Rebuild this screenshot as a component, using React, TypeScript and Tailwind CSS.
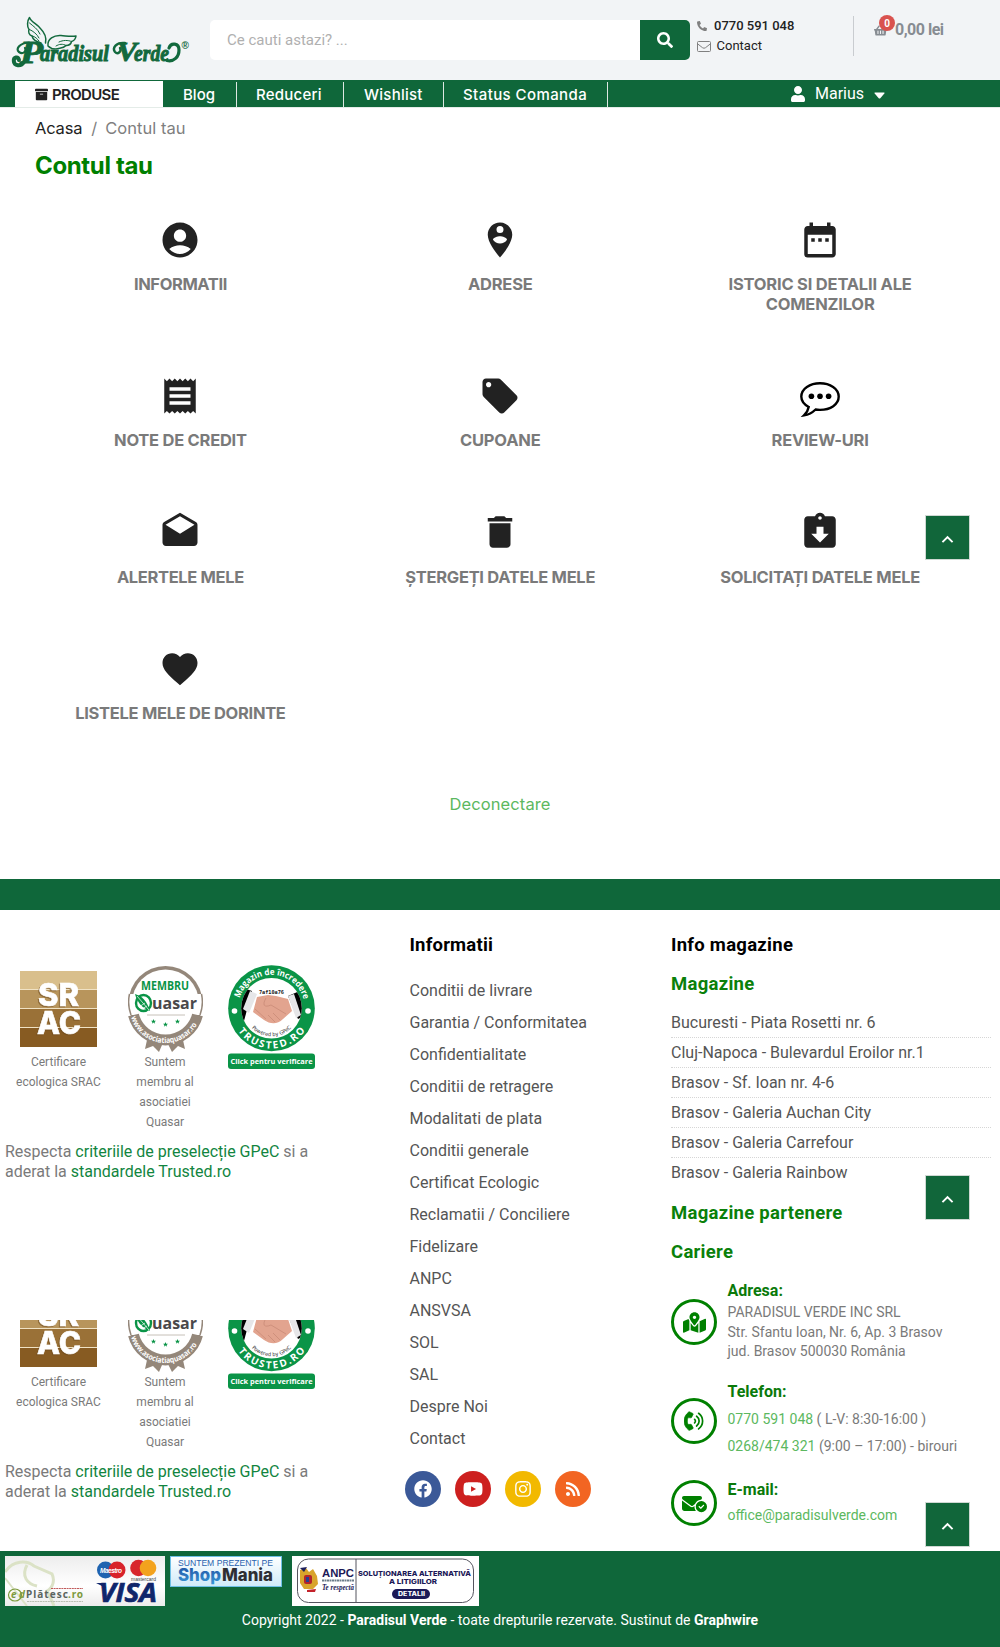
import React from "react";
import {
  MdAccountCircle,
  MdPersonPinCircle,
  MdDateRange,
  MdReceipt,
  MdLocalOffer,
  MdDrafts,
  MdDelete,
  MdAssignmentReturned,
  MdFavorite,
  MdKeyboardArrowUp,
} from "react-icons/md";
import {
  FaSearch,
  FaPhoneAlt,
  FaShoppingBasket,
  FaUser,
  FaArchive,
  FaMapMarkedAlt,
  FaFacebook,
  FaYoutube,
  FaInstagram,
  FaRss,
} from "react-icons/fa";
import { FaEnvelopeCircleCheck } from "react-icons/fa6";

function Logo() {
  return (
    <svg width="180" height="56" viewBox="0 0 180 56" className="mt-[14px] ml-[11px] shrink-0">
      <g fill="none" stroke="#12693d" strokeWidth="1.5" strokeLinecap="round" strokeLinejoin="round">
        <path d="M30 29C26 28 22 26 21 22C18 21 17 18 18 15.500C16 13 16 7 18.500 3.500C20 8 26 10 29 14C33 18 36 23 34.500 29" />
        <path d="M18.500 9C22 12 27 15 29 20M18.500 15.500C22 17 26 20 28 24M21.500 22C24 22.500 26.500 25 28 27" strokeWidth="1" />
        <path d="M37 32C36 25 43 21 50 21.500C56 22 60 23 65 22C64.500 25.500 62.500 27 60.500 27.500C60 30 57.500 31.500 55 31.500C52 35 48 33.500 45 35C42 35 39 34 37 32Z" />
        <path d="M60.500 27.500C57 26 52 26 48 28M55 31.500C52 29.500 48 30 45 32" strokeWidth="1" />
      </g>
      <g fill="none" stroke="#12693d" strokeLinecap="round">
        <path d="M18 28.500C9 29 4 35 8 38C12 41 16 37 14 34" strokeWidth="2.200" />
        <path d="M13 48C10 53 3 52 2.800 47C2.600 43 7 42 8 46" strokeWidth="4" />
        <path d="M114 29C105 28 101 34 104 38C107 41 111 37 109 34" strokeWidth="2.400" />
        <path d="M158 34C160 28 168 29 168 36C168 43 163 48 156 46.500" strokeWidth="3.200" />
      </g>
      <g
        fill="#12693d"
        stroke="#12693d"
        strokeWidth="1"
        fontFamily="'Liberation Serif', serif"
        fontWeight="700"
        fontStyle="italic"
      >
        <text x="9" y="48.500" fontSize="31" textLength="23" lengthAdjust="spacingAndGlyphs">P</text>
        <text x="29" y="47" fontSize="24" textLength="69" lengthAdjust="spacingAndGlyphs">aradisul</text>
        <text x="106" y="47" fontSize="28" textLength="20" lengthAdjust="spacingAndGlyphs">V</text>
        <text x="123" y="47" fontSize="24" textLength="35" lengthAdjust="spacingAndGlyphs">erde</text>
      </g>
      <text x="170.500" y="35" fontSize="10" fill="#12693d" fontWeight="700" fontFamily="'Liberation Sans', sans-serif">®</text>
    </svg>
  );
}

function ReviewIcon() {
  return (
    <svg width="42" height="42" viewBox="0 0 42 42" className="block">
      <path
        d="M21 8.200C31 8.200 39.700 13.600 39.700 21.600C39.700 29.600 31.500 34.900 21 34.900C19.400 34.900 17.900 34.800 16.600 34.500C13.400 37.600 9.200 39.800 5 40.400C7.600 37.800 9.200 35 9.700 32C5.200 29.600 2.300 26 2.300 21.600C2.300 13.600 11 8.200 21 8.200Z"
        fill="none"
        stroke="#000"
        strokeWidth="2.4"
      />
      <g fill="#000">
        <circle cx="12.4" cy="21.200" r="2.8" />
        <circle cx="21" cy="21.200" r="2.8" />
        <circle cx="29.600" cy="21.200" r="2.8" />
      </g>
    </svg>
  );
}

function PhoneWaves() {
  return (
    <svg width="20" height="20" viewBox="0 0 20 20" className="block">
      <path
        transform="translate(0 -0.4) scale(0.048 0.0385)"
        fill="currentColor"
        stroke="currentColor"
        strokeWidth="16"
        d="M97.333 506.966c-129.874-129.874-129.681-340.252 0-469.933 5.698-5.698 14.527-6.632 21.263-2.422l64.817 40.513a17.187 17.187 0 0 1 6.849 20.958l-32.408 81.021a17.188 17.188 0 0 1-17.669 10.719l-55.81-5.580c-21.051 58.261-20.612 122.471 0 179.515l55.811-5.581a17.188 17.188 0 0 1 17.669 10.719l32.408 81.022a17.188 17.188 0 0 1-6.849 20.958l-64.817 40.513a17.190 17.190 0 0 1-21.264-2.422z"
      />
      <g fill="none" stroke="currentColor" strokeWidth="1.700" strokeLinecap="round">
        <path d="M10.600 8.300A2.400 2.400 0 0 1 10.600 11.900" />
        <path d="M12.600 5.200A6 6 0 0 1 12.600 15" />
        <path d="M14.600 2.300A9.600 9.600 0 0 1 14.600 17.900" />
      </g>
    </svg>
  );
}

function Srac() {
  return (
    <svg width="77" height="76" viewBox="0 0 77 76" className="block">
      <rect width="77" height="76" fill="#f0e2c4" />
      <rect width="77" height="18" fill="#d9bf8c" />
      <rect y="19" width="77" height="18" fill="#b8955c" />
      <rect y="38" width="77" height="18" fill="#9a7137" />
      <rect y="57" width="77" height="19" fill="#875b22" />
      <g
        className="drop-shadow-[-1px_1px_0_rgba(110,75,30,0.6)]"
        fontFamily="Inter, sans-serif"
        fontWeight="800"
        fontSize="31"
        fill="#fff"
        stroke="#fff"
        strokeWidth="0.6"
      >
        <text x="18" y="35" textLength="41" lengthAdjust="spacingAndGlyphs">SR</text>
        <text x="17" y="63" textLength="44" lengthAdjust="spacingAndGlyphs">AC</text>
      </g>
    </svg>
  );
}

function Star({ x, y }: { x: number; y: number }) {
  return (
    <path
      transform={`translate(${x} ${y})`}
      d="M0-2.6L.7-.8L2.5-.8L1.1.4L1.6 2.2L0 1.1L-1.6 2.2L-1.1.4L-2.5-.8L-.7-.8Z"
      fill="#0a9447"
    />
  );
}

function Quasar({ id }: { id: string }) {
  return (
    <svg width="75" height="88" viewBox="0 0 75 88" className="block">
      <path d="M21 66L17 84L25 81L31 87L37 73L44 87L50 81L57 84L53 66Z" fill="#94877a" />
      <circle cx="37.500" cy="38" r="37" fill="#94877a" />
      <circle cx="37.500" cy="38" r="33.500" fill="#fff" />
      <path d="M0 29H75V50H0Z" fill="#fff" />
      <path d="M1.500 29A37 37 0 0 0 3 50M73.500 29A37 37 0 0 1 72 50" fill="none" stroke="#94877a" strokeWidth="1.500" />
      <path d="M5.500 50A33 33 0 0 0 69.500 50" fill="none" stroke="#94877a" strokeWidth="11" />
      <path id={id} d="M2.500 50.500A36 36 0 0 0 72.500 50.500" fill="none" />
      <text fontSize="7.900" fontWeight="700" fill="#fff" fontFamily="'Open Sans', sans-serif">
        <textPath href={`#${id}`} startOffset="2" textLength="84" lengthAdjust="spacingAndGlyphs">www.asociatiaquasar.ro</textPath>
      </text>
      <text x="13" y="24.500" fontSize="11.500" fontWeight="700" fill="#0a9447" fontFamily="'Open Sans', sans-serif" textLength="48" lengthAdjust="spacingAndGlyphs">MEMBRU</text>
      <ellipse cx="15.500" cy="38" rx="7.500" ry="8" fill="none" stroke="#0a9447" strokeWidth="2.400" />
      <path d="M7 29C14 31 19 36 22 46C14 43 9 37 7 29Z" fill="#0a9447" />
      <path d="M9 31L21 45M11 42L17 38M14 44L19 41" stroke="#fff" strokeWidth="0.7" />
      <text x="24" y="43.500" fontSize="16.500" fontWeight="700" fill="#4a484b" fontFamily="'Open Sans', sans-serif" textLength="45" lengthAdjust="spacingAndGlyphs">uasar</text>
      <path d="M19 50H57" stroke="#b8b0a6" strokeWidth="0.8" />
      <Star x={25.5} y={56.5} />
      <Star x={37.5} y={59.5} />
      <Star x={49.5} y={56.5} />
    </svg>
  );
}

function Trusted({ id }: { id: string }) {
  return (
    <svg width="88" height="104" viewBox="0 0 88 104" className="block">
      <ellipse cx="43.500" cy="43.200" rx="43.300" ry="43" fill="#0a9447" />
      <circle cx="43.500" cy="43.200" r="30.300" fill="#fff" />
      <clipPath id={`${id}-c`}><circle cx="43.500" cy="43.200" r="30.300" /></clipPath>
      <g clipPath={`url(#${id}-c)`}>
        <path d="M12 22L24 26L16 56L10 50Z" fill="#000" />
        <path d="M76 24L60 31L70 54L78 50Z" fill="#000" />
        <path d="M22 26L29 29L21 48L15 44Z" fill="#e6e6e8" />
        <path d="M60 31L66 29L73 50L68 53Z" fill="#e6e6e8" />
        <path d="M29 32L40 30L48 31L60 34L64 46L55 54C49 60 42 59 36 55L25 47Z" fill="#e2a48f" />
        <path d="M38 33C34 40 36 43 43 40L58 49M27 44L38 54M45 48L52 55M40 50L47 57" fill="none" stroke="#c98b77" strokeWidth="0.8" />
      </g>
      <path id={`${id}-a`} d="M10.100 43.200A33.400 33.400 0 0 1 76.900 43.200" fill="none" />
      <path id={`${id}-b`} d="M3.200 43.200A40.300 40.300 0 0 0 83.800 43.200" fill="none" />
      <path id={`${id}-d`} d="M15.500 43.200A28 28 0 0 0 71.500 43.200" fill="none" />
      <g fontFamily="'Open Sans', sans-serif" fontWeight="700" fill="#fff">
        <text fontSize="8.800"><textPath href={`#${id}-a`} startOffset="10" textLength="86" lengthAdjust="spacingAndGlyphs">Magazin de încredere</textPath></text>
        <text fontSize="10"><textPath href={`#${id}-b`} startOffset="24" textLength="79" lengthAdjust="spacing">TRUSTED.RO</textPath></text>
      </g>
      <text fontSize="5.200" fill="#333" fontFamily="'DejaVu Sans', sans-serif"><textPath href={`#${id}-d`} startOffset="22" textLength="44" lengthAdjust="spacingAndGlyphs">Powered by GPeC</textPath></text>
      <text x="31" y="28.500" fontSize="5.400" fontWeight="700" fill="#222" fontFamily="'DejaVu Sans Mono', monospace" textLength="25" lengthAdjust="spacingAndGlyphs">7af10a76</text>
      <circle cx="6.500" cy="46" r="2.800" fill="#fff" />
      <circle cx="80" cy="46" r="2.800" fill="#fff" />
      <rect y="88.500" width="87" height="15.500" rx="3" fill="#0a9447" />
      <text x="2.500" y="98.500" fontSize="7.800" fontWeight="700" fill="#fff" fontFamily="'Open Sans', sans-serif" textLength="82" lengthAdjust="spacingAndGlyphs">Click pentru verificare</text>
    </svg>
  );
}

function Badges({ id }: { id: string }) {
  return (
    <div className="h-[216px]">
      <div className="flex h-[167px] text-center text-[12px] leading-5 text-[#7a7a7a]">
        <div className="ml-[5px] flex w-[107px] flex-col items-center pt-[6px]">
          <Srac />
          <div className="mt-[5px] w-[90px]">Certificare ecologica SRAC</div>
        </div>
        <div className="flex w-[106px] flex-col items-center">
          <Quasar id={`${id}-q`} />
          <div className="-mt-px w-[70px]">Suntem membru al asociatiei Quasar</div>
        </div>
        <div className="ml-[10px]">
          <Trusted id={`${id}-t`} />
        </div>
      </div>
      <div className="mt-[10px] ml-[5px] w-[330px] text-[16px] leading-5 text-[#7a7a7a]">
        <div>Respecta <span className="text-[#12853f]">criteriile de preselecție GPeC</span> si a</div>
        <div>aderat la <span className="text-[#12853f]">standardele Trusted.ro</span></div>
      </div>
    </div>
  );
}

function UpButton({ place }: { place: string }) {
  return (
    <div className={`absolute left-[925px] flex size-[45px] items-center justify-center border border-[#cfd8d3] bg-[#11663a] ${place}`}>
      <MdKeyboardArrowUp className="mt-[3px] mr-px size-[23px] text-white" />
    </div>
  );
}

function EdPlatesc() {
  return (
    <svg width="160" height="50" viewBox="0 0 160 50" className="block">
      <defs>
        <linearGradient id="edg" x1="0" y1="0" x2="0" y2="1">
          <stop offset="0" stopColor="#ededed" />
          <stop offset="0.6" stopColor="#fff" />
          <stop offset="1" stopColor="#ececec" />
        </linearGradient>
      </defs>
      <rect width="160" height="50" fill="url(#edg)" />
      <g fill="none" stroke="#dbe2c6" strokeWidth="3">
        <path d="M0 16C8 4 22 4 29 10L47 18C50 24 48 32 42 35C46 43 48 47 49 50" />
        <path d="M22 9C16 20 22 28 32 30" />
        <path d="M0 22L22 50" strokeWidth="2" />
      </g>
      <ellipse cx="10" cy="39" rx="6.500" ry="6" fill="none" stroke="#7d9a3c" strokeWidth="1.200" />
      <g fontFamily="'Noto Sans', sans-serif" fontWeight="700" fontSize="10">
        <text x="6" y="42" fill="#7d9a3c" fontStyle="italic" textLength="14">ed</text>
        <text x="21" y="42" fill="#5b6560" textLength="42">Plătesc</text>
        <text x="63" y="42" fill="#7d9a3c" textLength="15">.ro</text>
      </g>
      <path d="M46 32.500H78" stroke="#c05a5a" strokeWidth="1" strokeDasharray="2 .6" />
      <path d="M22 45.500H78" stroke="#b9bfb2" strokeWidth="1" strokeDasharray="2 .6" />
      <circle cx="100.500" cy="14" r="8.500" fill="#1e63b0" />
      <circle cx="112" cy="14" r="8.500" fill="#d8232a" />
      <text x="95" y="17" fontSize="6.500" fontWeight="700" fontStyle="italic" fill="#fff" fontFamily="'Liberation Sans', sans-serif" textLength="22">Maestro</text>
      <circle cx="133.500" cy="12" r="8.300" fill="#d8262c" />
      <circle cx="143" cy="12" r="8.300" fill="#f3a21d" />
      <text x="126" y="24.500" fontSize="5" fill="#444" fontFamily="'Liberation Sans', sans-serif" textLength="25">mastercard</text>
      <text x="94" y="46" fontSize="26" fontWeight="700" fontStyle="italic" fill="#10266b" stroke="#10266b" strokeWidth=".7" fontFamily="'Open Sans', sans-serif" textLength="58" lengthAdjust="spacingAndGlyphs">VISA</text>
      <path d="M91 27H99L101 32Z" fill="#10266b" />
    </svg>
  );
}

function ShopMania() {
  return (
    <svg width="112" height="31" viewBox="0 0 112 31" className="block">
      <defs>
        <linearGradient id="smg" x1="0" y1="0" x2="0" y2="1">
          <stop offset="0" stopColor="#fff" />
          <stop offset="1" stopColor="#cfeaf9" />
        </linearGradient>
        <linearGradient id="smt" x1="0" y1="0" x2="0" y2="1">
          <stop offset="0" stopColor="#1f4fa0" />
          <stop offset="1" stopColor="#3a9ad9" />
        </linearGradient>
      </defs>
      <rect x="0.500" y="0.500" width="111" height="30" fill="url(#smg)" stroke="#6fc0e6" />
      <text x="8" y="10" fontSize="9" fill="#2a62ae" fontFamily="'Liberation Sans', sans-serif" textLength="95" lengthAdjust="spacingAndGlyphs">SUNTEM PREZENTI PE</text>
      <g fontFamily="Inter, sans-serif" fontSize="17" fontWeight="800">
        <text x="8" y="25" fill="url(#smt)" textLength="43" lengthAdjust="spacingAndGlyphs">Shop</text>
        <text x="52" y="25" fill="#2f2f33" textLength="51" lengthAdjust="spacingAndGlyphs">Mania</text>
      </g>
    </svg>
  );
}

function Anpc() {
  return (
    <svg width="187" height="50" viewBox="0 0 187 50" className="block">
      <rect width="187" height="50" fill="#fff" />
      <rect x="5.500" y="3" width="176" height="43.500" rx="11" fill="#fff" stroke="#55555f" strokeWidth="1" />
      <path d="M64 3V46.500" stroke="#55555f" />
      <path d="M8 14L14 12L17 16L21 13L25 20L26 28L21 33H12L8 27Z" fill="#d9a42c" />
      <path d="M8 12L15 11L12 16Z" fill="#1d1f5b" />
      <rect x="12" y="19" width="8" height="9" rx="2" fill="#b3242c" />
      <rect x="14" y="21" width="3" height="5" fill="#27408f" />
      <path d="M15 34L24 33L23 36H15Z" fill="#c4222b" />
      <g fontFamily="'Liberation Sans', sans-serif" fill="#1b1957" fontWeight="700">
        <text x="30" y="21" fontSize="11.500" textLength="32" lengthAdjust="spacingAndGlyphs">ANPC</text>
        <text x="30" y="34" fontSize="8" fontStyle="italic" fontFamily="'Liberation Serif', serif" textLength="32" lengthAdjust="spacingAndGlyphs">Te respectă</text>
      </g>
      <path d="M30 24.500H62" stroke="#6c7d8a" strokeWidth="2" strokeDasharray="2 .5" />
      <g fontFamily="Inter, sans-serif" fill="#1b1957" fontWeight="800" fontSize="6.700">
        <text x="66" y="19.500" textLength="113" lengthAdjust="spacingAndGlyphs">SOLUȚIONAREA ALTERNATIVĂ</text>
        <text x="97" y="27.800" textLength="48" lengthAdjust="spacingAndGlyphs">A LITIGIILOR</text>
      </g>
      <rect x="100" y="33" width="38" height="10" rx="5" fill="#1b1957" />
      <text x="106" y="40.300" fontSize="6" fontWeight="800" fill="#fff" fontFamily="Inter, sans-serif" textLength="27" lengthAdjust="spacingAndGlyphs">DETALII</text>
    </svg>
  );
}

const tiles = [
  { icon: <MdAccountCircle />, label: ["INFORMATII"], box: "h-[156px]", text: "mt-[13px] tracking-[-0.4px]" },
  { icon: <MdPersonPinCircle />, label: ["ADRESE"], box: "", text: "mt-[13px] tracking-[-0.2px]" },
  { icon: <MdDateRange />, label: ["ISTORIC SI DETALII ALE", "COMENZILOR"], box: "", text: "mt-[13px] tracking-[-0.2px]" },
  { icon: <MdReceipt />, label: ["NOTE DE CREDIT"], box: "h-[136px]", text: "mt-[13px] tracking-[-0.25px]" },
  { icon: <MdLocalOffer />, label: ["CUPOANE"], box: "", text: "mt-[13px] tracking-[-0.2px]" },
  { icon: <ReviewIcon />, label: ["REVIEW-URI"], box: "", text: "mt-[13px] tracking-[-0.25px]" },
  { icon: <MdDrafts />, label: ["ALERTELE MELE"], box: "h-[137px]", text: "mt-[14px] tracking-[-0.35px]" },
  { icon: <MdDelete />, label: ["ȘTERGEȚI DATELE MELE"], box: "", text: "mt-[14px] tracking-[-0.3px]" },
  { icon: <MdAssignmentReturned />, label: ["SOLICITAȚI DATELE MELE"], box: "", text: "mt-[14px] tracking-[-0.25px]" },
  { icon: <MdFavorite />, label: ["LISTELE MELE DE DORINTE"], box: "", text: "mt-[13px] tracking-[-0.3px]" },
];

const links = [
  "Conditii de livrare", "Garantia / Conformitatea", "Confidentialitate", "Conditii de retragere", "Modalitati de plata",
  "Conditii generale", "Certificat Ecologic", "Reclamatii / Conciliere", "Fidelizare", "ANPC", "ANSVSA", "SOL", "SAL", "Despre Noi", "Contact",
];

const shops = [
  "Bucuresti - Piata Rosetti nr. 6", "Cluj-Napoca - Bulevardul Eroilor nr.1", "Brasov - Sf. Ioan nr. 4-6",
  "Brasov - Galeria Auchan City", "Brasov - Galeria Carrefour", "Brasov - Galeria Rainbow",
];

function Ring({ children }: { children: React.ReactNode }) {
  return (
    <div className="flex size-[46px] shrink-0 items-center justify-center rounded-full border-[3px] border-[#008000] text-[#008000]">
      {children}
    </div>
  );
}

export default function App() {
  return (
    <div className="relative h-[1647px] w-[1000px] overflow-hidden bg-white font-[Roboto,sans-serif]">
      <header className="flex h-20 bg-[#f2f4f6]">
        <Logo />
        <div className="mt-5 ml-[19px] flex h-10 w-[480px] overflow-hidden rounded-[5px] bg-white">
          <div className="flex-1 pl-[17px] text-[15px] leading-10 text-[#b0b0b0]">Ce cauti astazi? ...</div>
          <div className="flex w-[50px] items-center justify-center bg-[#0f673a] text-white">
            <FaSearch className="size-4" />
          </div>
        </div>
        <div className="mt-4 ml-[7px] h-10 w-[157px] border-r border-[#c9ccd0] text-[13px] leading-5">
          <div className="flex h-5 items-center font-medium text-[#222]">
            <FaPhoneAlt className="mr-[7px] size-[10px] text-[#808080]" />0770 591 048
          </div>
          <div className="flex h-5 items-center text-[#222]">
            <svg width="14" height="11" viewBox="0 0 14 11" className="mr-[5.5px]" fill="none" stroke="#808080">
              <rect x="0.500" y="0.500" width="13" height="10" rx="1" />
              <path d="M.8 3L5.500 6.700Q7 7.800 8.500 6.700L13.200 3" />
            </svg>
            Contact
          </div>
        </div>
        <div className="relative mt-[19px] ml-[20px] flex h-[22px] items-center text-[#878c92]">
          <FaShoppingBasket className="size-[13px]" />
          <span className="ml-[8px] text-[16px] font-bold tracking-[-0.5px]">0,00 lei</span>
          <span className="absolute -top-1 left-[5px] flex size-4 items-center justify-center rounded-full bg-[#d9534f] text-[10px] font-bold text-white">0</span>
        </div>
      </header>

      <nav className="flex h-[27px] bg-[#0f673a] font-[Inter,sans-serif] text-[15px] font-medium text-white">
        <div className="mt-px ml-[15px] flex w-[148px] items-center bg-white pl-5 text-[#222]">
          <FaArchive className="size-[13px]" />
          <span className="ml-1 pt-[2px] font-semibold tracking-[-0.65px]">PRODUSE</span>
        </div>
        <div className="mt-0.5 flex w-[74px] items-center border-r border-[#dde8e2] pt-0.5 pl-5">Blog</div>
        <div className="mt-0.5 flex w-[107px] items-center border-r border-[#dde8e2] pt-0.5 pl-[19px] tracking-[0.25px]">Reduceri</div>
        <div className="mt-0.5 flex w-[100px] items-center border-r border-[#dde8e2] pt-0.5 pl-5 tracking-[0.25px]">Wishlist</div>
        <div className="mt-0.5 flex w-[164px] items-center border-r border-[#dde8e2] pt-0.5 pl-[19px] tracking-[0.42px]">Status Comanda</div>
        <div className="ml-[182px] flex items-center font-[Roboto,sans-serif] text-[16px] font-normal">
          <FaUser className="size-4" />
          <span className="ml-[9px]">Marius</span>
          <svg width="11" height="7" viewBox="0 0 11 7" className="mt-[3px] ml-[10px]" fill="currentColor">
            <path d="M1 .5H10Q11 .5 10.300 1.500L6.500 6Q5.500 7 4.500 6L.7 1.500Q0 .5 1 .5Z" />
          </svg>
        </div>
      </nav>

      <main className="h-[772px] border-t border-[#e4ece8] font-[Inter,sans-serif]">
        <div className="flex h-[40px] items-center pl-[35px] text-[16.5px] text-[#7f7f7f]">
          <span className="tracking-[-0.2px] text-[#222]">Acasa</span>
          <span className="mr-[8px] ml-[9px]">/</span>
          <span className="tracking-[0.05px]">Contul tau</span>
        </div>
        <h1 className="h-[34px] pt-px pl-[35px] text-[24px] leading-[34px] font-bold tracking-[-0.35px] text-[#008000]">Contul tau</h1>
        <div className="mr-5 ml-[20.5px] mt-[37px] grid grid-cols-3">
          {tiles.map((t) => (
            <div key={t.label[0]} className={`flex flex-col items-center ${t.box}`}>
              <div className="text-[42px] text-[#222]">{t.icon}</div>
              <div className={`text-center text-[16.5px] leading-5 font-bold text-[#7a7a7a] ${t.text}`}>
                {t.label.map((l) => (
                  <div key={l}>{l}</div>
                ))}
              </div>
            </div>
          ))}
        </div>
        <div className="mt-[71px] text-center text-[16.5px] leading-5 tracking-[0.1px] text-[#5cb860]">Deconectare</div>
      </main>
      <div className="h-[31px] bg-[#0f673a]" />

      <footer className="flex h-[641px]">
        <div className="w-[405px] pt-[55px]">
          <Badges id="one" />
          <div className="mt-[139px] h-[216px] overflow-hidden">
            <div className="-mt-[35px]">
              <Badges id="two" />
            </div>
          </div>
        </div>
        <div className="w-[266px] pt-[20px]">
          <div className="ml-[4.5px] h-[45px] text-[18.5px] leading-[30px] font-bold tracking-[0.2px] text-black">Informatii</div>
          <ul className="ml-[4.5px] text-[16px] leading-8 text-[#555]">
            {links.map((l) => (
              <li key={l}>{l}</li>
            ))}
          </ul>
          <div className="mt-[16px] flex gap-[14px] text-white">
            <div className="flex size-9 items-center justify-center rounded-full bg-[#3b5998]"><FaFacebook className="size-[18px]" /></div>
            <div className="flex size-9 items-center justify-center rounded-full bg-[#cd201f]"><FaYoutube className="size-5" /></div>
            <div className="flex size-9 items-center justify-center rounded-full bg-[#f2b900]"><FaInstagram className="size-[18px]" /></div>
            <div className="flex size-9 items-center justify-center rounded-full bg-[#f26522]"><FaRss className="size-4" /></div>
          </div>
        </div>
        <div className="w-[320px] pt-[20px]">
          <div className="text-[18.5px] leading-[30px] font-bold tracking-[0.28px] text-black">Info magazine</div>
          <div className="mt-[9px] text-[18.5px] leading-[30px] font-bold tracking-[0.28px] text-[#0a800a]">Magazine</div>
          <ul className="mt-[9px] text-[16px] text-[#555]">
            {shops.map((s, i) => (
              <li key={s} className={i < 5 ? "h-[30px] border-b border-dotted border-[#d6d6d6] leading-[29px]" : "h-[30px] leading-[29px]"}>{s}</li>
            ))}
          </ul>
          <div className="mt-[10px] text-[18.5px] leading-[30px] font-bold tracking-[0.28px] text-[#0a800a]">Magazine partenere</div>
          <div className="mt-[9px] text-[18.5px] leading-[30px] font-bold tracking-[0.28px] text-[#0a800a]">Cariere</div>
          <div className="mt-[13px] flex h-[101px]">
            <div className="pt-[19px]"><Ring><FaMapMarkedAlt className="size-[23px]" /></Ring></div>
            <div className="ml-[10.5px] text-[14px] leading-[19.5px] text-[#7a7a7a]">
              <div className="mb-[2px] text-[16px] leading-[21px] font-bold text-[#0a7a0a]">Adresa:</div>
              <div>PARADISUL VERDE INC SRL</div>
              <div>Str. Sfantu Ioan, Nr. 6, Ap. 3 Brasov</div>
              <div>jud. Brasov 500030 România</div>
            </div>
          </div>
          <div className="flex h-[98px]">
            <div className="pt-[17px]"><Ring><PhoneWaves /></Ring></div>
            <div className="ml-[10.5px] text-[14px] leading-[27px] text-[#7a7a7a]">
              <div className="mb-[4px] text-[16px] leading-[21px] font-bold text-[#0a7a0a]">Telefon:</div>
              <div><span className="text-[#5cb860]">0770 591 048</span> ( L-V: 8:30-16:00 )</div>
              <div><span className="text-[#5cb860]">0268/474 321</span> (9:00 – 17:00) - birouri</div>
            </div>
          </div>
          <div className="flex">
            <div className="pt-px"><Ring><FaEnvelopeCircleCheck className="size-[25px]" /></Ring></div>
            <div className="ml-[10.5px] text-[14px] leading-[27px] text-[#5cb860]">
              <div className="mb-[2px] text-[16px] leading-[21px] font-bold text-[#0a7a0a]">E-mail:</div>
              <div>office@paradisulverde.com</div>
            </div>
          </div>
        </div>
      </footer>

      <div className="h-[96px] bg-[#0f673a] pt-[5px]">
        <div className="flex h-[50px] items-start pl-[5px]">
          <EdPlatesc />
          <div className="ml-[5px]"><ShopMania /></div>
          <div className="ml-[10px]"><Anpc /></div>
        </div>
        <div className="mt-[4px] text-center text-[14px] leading-5 text-white">
          Copyright 2022 - <b>Paradisul Verde</b> - toate drepturile rezervate. Sustinut de <b>Graphwire</b>
        </div>
      </div>

      <UpButton place="top-[515px]" />
      <UpButton place="top-[1175px]" />
      <UpButton place="top-[1502px]" />
    </div>
  );
}
